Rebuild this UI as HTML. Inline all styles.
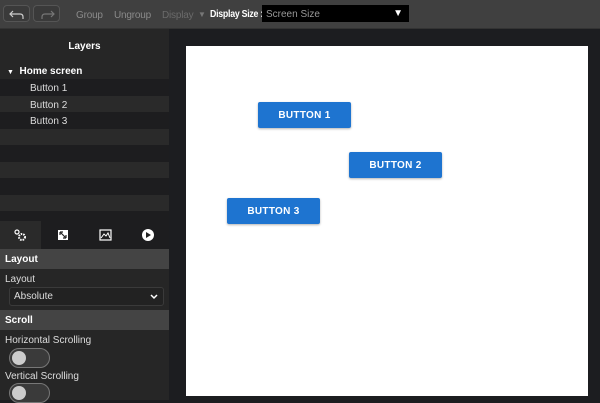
<!DOCTYPE html>
<html><head><style>
*{margin:0;padding:0;box-sizing:border-box}
body{width:600px;height:400px;overflow:hidden;background:#1c1d20;font-family:"Liberation Sans",sans-serif;position:relative}
.a{position:absolute}
.top{left:0;top:0;width:600px;height:29px;background:#404040;border-bottom:1px solid #333}
.ib{top:5px;width:27px;height:17px;border:1px solid #555;border-radius:4px;background:#3a3a3a}
.tt{top:9px;font-size:10px;color:#8a8a8a;letter-spacing:-0.2px;white-space:nowrap}
.left{left:0;top:29px;width:169px;height:371px;background:#262626}
.row{left:0;width:169px;height:17px;font-size:10px;color:#ddd;line-height:19px}
.btn{background:#1e74d0;color:#fff;font-size:10px;font-weight:bold;text-align:center;line-height:28px;border-radius:2px;box-shadow:0 1px 2px rgba(0,0,0,.3);height:26px;width:93px;letter-spacing:.3px}
.hdr{left:0;width:169px;height:20px;background:#444;color:#fff;font-weight:bold;font-size:10px;line-height:22px;padding-left:5px}
.lbl{left:5px;font-size:10px;color:#ddd}
.tog{left:9px;width:41px;height:20px;border:1px solid #777;border-radius:10px;background:#3a3a3a}
.tog:after{content:"";position:absolute;left:2px;top:2px;width:14px;height:14px;border-radius:7px;background:#ccc}
</style></head><body>
<div class="a top"></div>
<div class="a ib" style="left:3px"><svg width="27" height="17" viewBox="0 0 27 17"><path d="M9 5 L6 8 L9 11 M6 8 H16 Q19 8 19 11 V13" fill="none" stroke="#ccc" stroke-width="1.2"/></svg></div>
<div class="a ib" style="left:33px"><svg width="27" height="17" viewBox="0 0 27 17"><path d="M17 5 L20 8 L17 11 M20 8 H11 Q8 8 8 11 V13" fill="none" stroke="#777" stroke-width="1.2"/></svg></div>
<div class="a tt" style="left:76px;top:10px">Group</div>
<div class="a tt" style="left:114px;top:10px">Ungroup</div>
<div class="a tt" style="left:162px;top:10px;color:#6a6a6a">Display</div>
<div class="a tt" style="left:198px;color:#777;font-size:8px;top:10px">▼</div>
<div class="a tt" style="left:210px;top:9px;color:#fff;font-weight:bold;font-size:10px;letter-spacing:-0.3px;transform:scaleX(0.88);transform-origin:0 0">Display Size :</div>
<div class="a" style="left:262px;top:5px;width:147px;height:17px;background:#000;color:#999;font-size:10px;line-height:19px;padding-left:4px">Screen Size<span style="position:absolute;right:6px;top:0;line-height:17px;color:#fff;font-size:10px">▼</span></div>

<div class="a left"></div>
<div class="a" style="left:0;top:41px;width:169px;text-align:center;color:#fff;font-weight:bold;font-size:10px">Layers</div>
<div class="a row" style="top:62px;color:#fff;font-weight:bold;padding-left:7px"><span style="font-size:7px">▼</span>&nbsp; Home screen</div>
<div class="a row" style="top:79px;background:#1d1d1f;padding-left:30px">Button 1</div>
<div class="a row" style="top:96px;background:#2a2a2a;padding-left:30px">Button 2</div>
<div class="a row" style="top:112px;background:#1d1d1f;padding-left:30px">Button 3</div>
<div class="a row" style="top:129px;background:#2a2a2a"></div>
<div class="a row" style="top:145px;background:#1d1d1f"></div>
<div class="a row" style="top:162px;background:#2a2a2a"></div>
<div class="a row" style="top:178px;background:#1d1d1f"></div>
<div class="a row" style="top:195px;background:#2a2a2a"></div>
<div class="a row" style="top:211px;height:11px;background:#1d1d1f"></div>
<div class="a" style="left:0;top:221px;width:169px;height:28px;background:#1d1d1f"></div>
<div class="a" style="left:0;top:221px;width:41px;height:28px;background:#2a2a2a"></div>
<svg class="a" style="left:0;top:221px" width="169" height="28" viewBox="0 0 169 28">
<circle cx="17" cy="11" r="2" fill="none" stroke="#fff" stroke-width="1.2"/><circle cx="22" cy="16" r="3" fill="none" stroke="#fff" stroke-width="2" stroke-dasharray="1.5 1"/>
<rect x="58" y="9" width="10" height="10" fill="#fff"/><path d="M60 11 L66 17 M60 11 h3 M60 11 v3 M66 17 h-3 M66 17 v-3" stroke="#222" stroke-width="1.2"/>
<rect x="100" y="9" width="11" height="10" fill="none" stroke="#fff" stroke-width="1.2"/><path d="M101 17 L104 13 L106 15 L108 12 L110 17" fill="none" stroke="#fff"/>
<circle cx="148" cy="14" r="6" fill="#fff"/><path d="M146 11 L151 14 L146 17Z" fill="#222"/>
</svg>
<div class="a hdr" style="top:249px">Layout</div>
<div class="a lbl" style="top:274px">Layout</div>
<div class="a" style="left:9px;top:287px;width:155px;height:19px;border:1px solid #3a3a3a;border-radius:3px;background:#222;color:#ddd;font-size:10px;line-height:18px;padding-left:4px">Absolute<svg style="position:absolute;right:5px;top:6px" width="8" height="6"><path d="M1 1 L4 4 L7 1" fill="none" stroke="#fff" stroke-width="1.5"/></svg></div>
<div class="a hdr" style="top:310px">Scroll</div>
<div class="a lbl" style="top:335px">Horizontal Scrolling</div>
<div class="a tog" style="top:348px"></div>
<div class="a lbl" style="top:371px">Vertical Scrolling</div>
<div class="a tog" style="top:383px"></div>

<div class="a" style="left:186px;top:46px;width:402px;height:350px;background:#fff"></div>
<div class="a btn" style="left:258px;top:102px">BUTTON 1</div>
<div class="a btn" style="left:349px;top:152px">BUTTON 2</div>
<div class="a btn" style="left:227px;top:198px">BUTTON 3</div>
</body></html>
